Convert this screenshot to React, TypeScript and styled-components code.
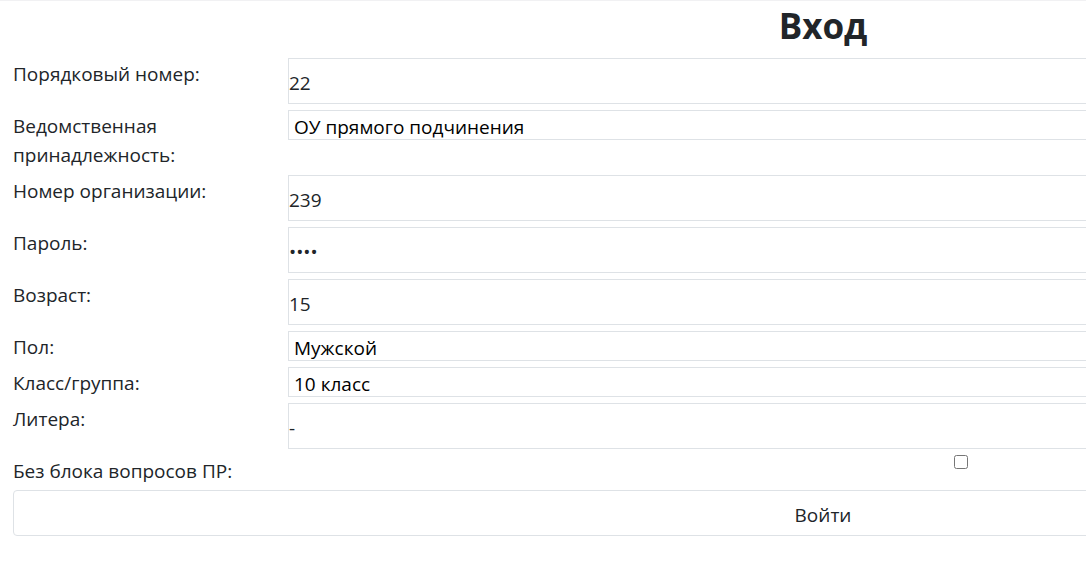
import React from "react";
import styled, { createGlobalStyle } from "styled-components";

const GlobalStyle = createGlobalStyle`
  html, body {
    margin: 0;
    padding: 0;
    background: #ffffff;
    overflow: hidden;
  }
  body {
    font-family: "Open Sans", "Noto Sans", sans-serif;
    font-size: 19px;
    color: #212529;
  }
`;

const Page = styled.div`
  width: 1620px;
  padding: 4px 13px 0 13px;
  border-top: 1px solid #f1f1f3;
`;

const Title = styled.h1`
  margin: 0 0 11px 0;
  text-align: center;
  font-size: 35px;
  line-height: 42px;
  font-weight: 700;
  color: #212529;
`;

const Form = styled.form`
  display: flex;
  flex-direction: column;
`;

const Row = styled.div`
  display: grid;
  grid-template-columns: 275px 1fr;
  margin-bottom: 6px;
`;

const Label = styled.label`
  padding-top: 2px;
  margin-bottom: -1px;
  line-height: 29px;
  font-size: 19px;
  color: #212529;
`;

const TextInput = styled.input`
  box-sizing: border-box;
  width: 100%;
  height: 46px;
  margin: 0;
  padding: 3px 0 0 0;
  border: 1px solid #dee2e6;
  border-radius: 0;
  outline: none;
  background: #fff;
  font-family: inherit;
  font-size: 19px;
  color: #212529;
`;

const Select = styled.select`
  box-sizing: border-box;
  width: 100%;
  height: 30px;
  margin: 0;
  padding: 3px 5px 0 5px;
  border: 1px solid #dee2e6;
  border-radius: 0;
  background: #fff;
  font-family: inherit;
  font-size: 19px;
  color: #000;
  appearance: none;
  outline: none;
`;

const Check = styled.input`
  justify-self: center;
  align-self: start;
  margin: 0;
  width: 14px;
  height: 14px;
`;

const Submit = styled.button`
  box-sizing: border-box;
  width: 100%;
  height: 46px;
  margin-top: -1px;
  padding: 4px 0 0 0;
  border: 1px solid #dee2e6;
  border-radius: 4px;
  background: #fff;
  font-family: inherit;
  font-size: 19px;
  color: #212529;
  cursor: pointer;
`;

export default function App() {
  return (
    <>
      <GlobalStyle />
      <Page>
        <Title>Вход</Title>
        <Form onSubmit={(e) => e.preventDefault()}>
          <Row>
            <Label>Порядковый номер:</Label>
            <TextInput type="text" defaultValue="22" />
          </Row>
          <Row>
            <Label>Ведомственная принадлежность:</Label>
            <Select defaultValue="ou">
              <option value="ou">ОУ прямого подчинения</option>
            </Select>
          </Row>
          <Row>
            <Label>Номер организации:</Label>
            <TextInput type="text" defaultValue="239" />
          </Row>
          <Row>
            <Label>Пароль:</Label>
            <TextInput type="password" defaultValue="1234" />
          </Row>
          <Row>
            <Label>Возраст:</Label>
            <TextInput type="text" defaultValue="15" />
          </Row>
          <Row>
            <Label>Пол:</Label>
            <Select defaultValue="m">
              <option value="m">Мужской</option>
            </Select>
          </Row>
          <Row>
            <Label>Класс/группа:</Label>
            <Select defaultValue="10">
              <option value="10">10 класс</option>
            </Select>
          </Row>
          <Row>
            <Label>Литера:</Label>
            <TextInput type="text" defaultValue="-" />
          </Row>
          <Row>
            <Label>Без блока вопросов ПР:</Label>
            <Check type="checkbox" />
          </Row>
          <Submit type="submit">Войти</Submit>
        </Form>
      </Page>
    </>
  );
}
